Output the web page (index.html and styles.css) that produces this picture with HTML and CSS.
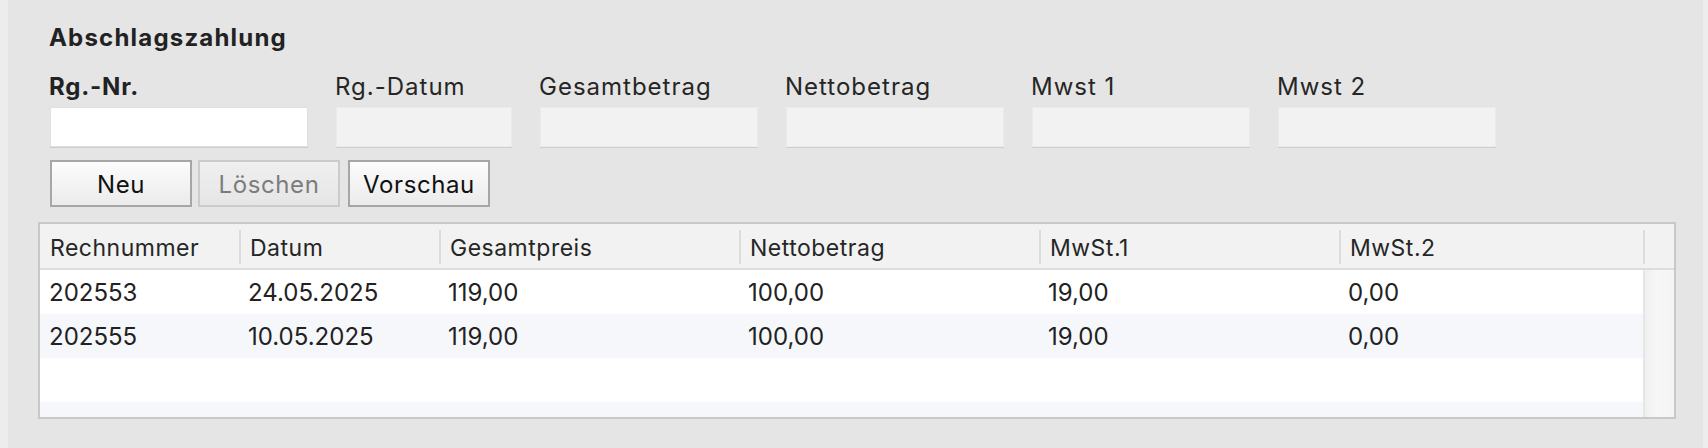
FILE: index.html
```html
<!DOCTYPE html>
<html lang="de">
<head>
<meta charset="utf-8">
<title>Abschlagszahlung</title>
<link rel="stylesheet" href="styles.css">
</head>
<body>
<div class="window">
  <div class="edge edge-left"></div>
  <main class="panel">
    <section class="form">
      <h1 class="title">Abschlagszahlung</h1>
      <div class="fields">
        <div class="field field-nr">
          <label class="label label-bold">Rg.-Nr.</label>
          <div class="input input-white"></div>
        </div>
        <div class="field field-date">
          <label class="label">Rg.-Datum</label>
          <div class="input"></div>
        </div>
        <div class="field field-amt">
          <label class="label">Gesamtbetrag</label>
          <div class="input"></div>
        </div>
        <div class="field field-amt">
          <label class="label">Nettobetrag</label>
          <div class="input"></div>
        </div>
        <div class="field field-amt">
          <label class="label">Mwst 1</label>
          <div class="input"></div>
        </div>
        <div class="field field-amt">
          <label class="label">Mwst 2</label>
          <div class="input"></div>
        </div>
      </div>
      <div class="buttons">
        <button class="btn">Neu</button>
        <button class="btn btn-disabled">Löschen</button>
        <button class="btn btn-last">Vorschau</button>
      </div>
    </section>
    <div class="table">
      <div class="thead">
        <div class="th first">Rechnummer</div>
        <div class="th">Datum</div>
        <div class="th">Gesamtpreis</div>
        <div class="th">Nettobetrag</div>
        <div class="th">MwSt.1</div>
        <div class="th">MwSt.2</div>
        <div class="th corner"></div>
      </div>
      <div class="tbody">
        <div class="rows">
          <div class="tr">
            <div class="td">202553</div>
            <div class="td">24.05.2025</div>
            <div class="td">119,00</div>
            <div class="td">100,00</div>
            <div class="td">19,00</div>
            <div class="td">0,00</div>
          </div>
          <div class="tr alt">
            <div class="td">202555</div>
            <div class="td">10.05.2025</div>
            <div class="td">119,00</div>
            <div class="td">100,00</div>
            <div class="td">19,00</div>
            <div class="td">0,00</div>
          </div>
          <div class="tr"></div>
          <div class="tr alt"></div>
        </div>
        <div class="vscroll"></div>
      </div>
    </div>
  </main>
  <div class="edge edge-right"></div>
</div>
</body>
</html>
```

FILE: styles.css
```css
* { box-sizing: border-box; }

html, body {
  margin: 0;
  padding: 0;
  height: 448px;
  overflow: hidden;
  background: #ececec;
  font-family: "Inter", "Liberation Sans", sans-serif;
  color: #222222;
}

.window {
  display: flex;
  height: 448px;
}

.edge { flex: none; background: #ededed; }
.edge-left { width: 8px; }
.edge-right { width: 5px; }

.panel {
  flex: 1;
  background: #e5e5e5;
  padding: 23px 27px 0 30px;
  display: flex;
  flex-direction: column;
}

.form {
  padding-left: 11px;
  display: flex;
  flex-direction: column;
}

.title {
  margin: 0;
  font-size: 24px;
  line-height: 29px;
  font-weight: 700;
  letter-spacing: 1.2px;
  color: #222222;
}

.fields {
  display: flex;
  gap: 27px;
  margin-top: 20px;
}

.field { display: flex; flex-direction: column; }
.field-nr { width: 259px; }
.field-date { width: 177px; }
.field-amt { width: 219px; }

.label {
  font-size: 24px;
  line-height: 29px;
  font-weight: 400;
  letter-spacing: 1px;
  white-space: nowrap;
  color: #262626;
}
.label-bold { font-weight: 700; color: #222222; letter-spacing: 0.8px; }

.input {
  margin: 6px 0 0 1px;
  height: 40px;
  background: #f2f2f2;
  border: 1px solid #ebebeb;
  box-shadow: 0 1px 0 #cdcdcd;
}
.input-white { background: #ffffff; border-color: #e0e0e0; }

.buttons {
  display: flex;
  gap: 6px;
  margin: 13px 0 0 1px;
}

.btn {
  width: 142px;
  height: 47px;
  padding: 2px 0 0;
  border: 2px solid #a6a6a6;
  background: linear-gradient(#fcfcfc, #ebebeb);
  font-family: "Inter", "Liberation Sans", sans-serif;
  font-size: 24px;
  letter-spacing: 0.6px;
  color: #111111;
}
.btn-disabled {
  border-color: #cbcbcb;
  background: linear-gradient(#efefef, #e6e6e6);
  color: #7c7c7c;
}
.btn-last { margin-left: 2px; }

.table {
  margin-top: 15px;
  width: 1638px;
  border: 2px solid #c8c8c8;
  display: flex;
  flex-direction: column;
}

.thead {
  display: grid;
  grid-template-columns: 199px 200px 300px 300px 300px 304px 1fr;
  height: 46px;
  background: #f1f2f1;
  border-bottom: 2px solid #dcdddc;
}

.th {
  font-size: 23px;
  line-height: 44px;
  letter-spacing: 0.5px;
  padding: 2px 0 0 11px;
  white-space: nowrap;
  color: #262626;
  background: linear-gradient(#dcdcdc, #dcdcdc) 0 6px / 2px 34px no-repeat;
}
.th.first { background: none; padding-left: 10px; }

.tbody {
  display: flex;
  height: 147px;
  overflow: hidden;
}

.rows { width: 1603px; }

.tr {
  display: grid;
  grid-template-columns: 199px 200px 300px 300px 300px 304px;
  height: 44px;
  background: #ffffff;
}
.tr.alt { background: #f5f7fa; }

.td {
  font-size: 24px;
  line-height: 44px;
  padding: 1px 0 0 9px;
  white-space: nowrap;
  color: #222222;
}

.vscroll {
  flex: 1;
  background: linear-gradient(90deg, #f0f0f0, #f7f7f7 40%, #f4f4f4);
  border-left: 2px solid #e6e6e6;
}
```
